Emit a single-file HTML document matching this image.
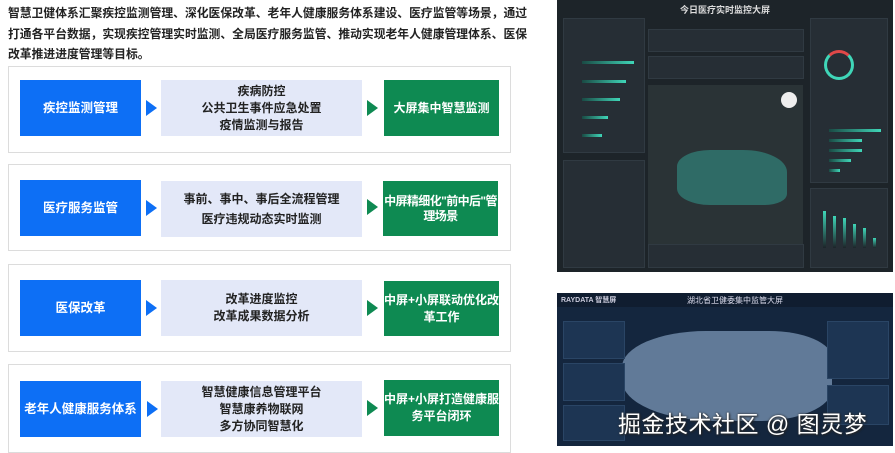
<!DOCTYPE html>
<html><head><meta charset="utf-8"><style>
*{margin:0;padding:0;box-sizing:border-box}
body{width:895px;height:453px;background:#fff;position:relative;overflow:hidden;font-family:"Liberation Sans","Noto Sans CJK SC",sans-serif}
.intro{position:absolute;left:8px;top:3px;white-space:nowrap;font-size:11.8px;font-weight:bold;line-height:20.5px;color:#222}
.frame{position:absolute;left:8px;width:503px;border:1.5px solid #dcdcdc;background:#fff}
.b{position:absolute;display:flex;align-items:center;justify-content:center;text-align:center;font-weight:bold;font-size:12.5px;line-height:17px}
.blue{left:20px;width:121px;height:56px;background:#0d6ff5;color:#fff}
.mid{left:161px;width:201px;height:56px;background:#e3e8f8;color:#222;font-size:12px}
.green{left:384px;width:115px;height:56px;background:#0e8a52;color:#fff;font-size:12px}
.ar{position:absolute;width:0;height:0;border-top:8px solid transparent;border-bottom:8px solid transparent;border-left:11px solid #0d6ff5}
.ag{border-left-color:#0e8a52}
.dark{position:absolute;background:#1b2228}
.p{position:absolute;background:#262e35;border:1px solid #303a42}
.bar{position:absolute;height:3px;background:linear-gradient(90deg,#1a4a44,#3fd6b8)}
.wm{position:absolute;left:618px;top:405px;font-size:23px;color:#fff;text-shadow:0 0 2px #333,1px 1px 2px #222;letter-spacing:0.5px}
</style></head><body>
<div class="intro">智慧卫健体系汇聚疾控监测管理、深化医保改革、老年人健康服务体系建设、医疗监管等场景，通过<br>打通各平台数据，实现疾控管理实时监测、全局医疗服务监管、推动实现老年人健康管理体系、医保<br>改革推进进度管理等目标。</div>

<div class="frame" style="top:66px;height:87px"></div>
<div class="b blue" style="top:80px">疾控监测管理</div>
<div class="ar" style="left:146px;top:100px"></div>
<div class="b mid" style="top:80px">疾病防控<br>公共卫生事件应急处置<br>疫情监测与报告</div>
<div class="ar ag" style="left:367px;top:100px"></div>
<div class="b green" style="top:80px">大屏集中智慧监测</div>

<div class="frame" style="top:164px;height:87px"></div>
<div class="b blue" style="top:180px">医疗服务监管</div>
<div class="ar" style="left:146px;top:200px"></div>
<div class="b mid" style="top:181px;line-height:20px">事前、事中、事后全流程管理<br>医疗违规动态实时监测</div>
<div class="ar ag" style="left:367px;top:199px"></div>
<div class="b green" style="top:181px;height:55px;left:383px;font-size:12px;letter-spacing:-0.6px;line-height:15px;white-space:nowrap">中屏精细化"前中后"管<br>理场景</div>

<div class="frame" style="top:264px;height:88px"></div>
<div class="b blue" style="top:280px">医保改革</div>
<div class="ar" style="left:146px;top:300px"></div>
<div class="b mid" style="top:280px">改革进度监控<br>改革成果数据分析</div>
<div class="ar ag" style="left:367px;top:300px"></div>
<div class="b green" style="top:281px;height:55px">中屏+小屏联动优化改<br>革工作</div>

<div class="frame" style="top:364px;height:89px"></div>
<div class="b blue" style="top:381px">老年人健康服务体系</div>
<div class="ar" style="left:147px;top:401px"></div>
<div class="b mid" style="top:381px">智慧健康信息管理平台<br>智慧康养物联网<br>多方协同智慧化</div>
<div class="ar ag" style="left:367px;top:400px"></div>
<div class="b green" style="top:380px">中屏+小屏打造健康服<br>务平台闭环</div>

<div class="dark" style="left:557px;top:0;width:336px;height:272px;background:#1d2429">
 <div style="position:absolute;left:0;top:3px;width:336px;text-align:center;color:#ddd;font-size:9px;font-weight:bold">今日医疗实时监控大屏</div>
 <div class="p" style="left:6px;top:18px;width:82px;height:135px"></div>
 <div class="bar" style="left:25px;top:61px;width:52px"></div>
 <div class="bar" style="left:25px;top:80px;width:44px"></div>
 <div class="bar" style="left:25px;top:98px;width:38px"></div>
 <div class="bar" style="left:25px;top:116px;width:26px"></div>
 <div class="bar" style="left:25px;top:134px;width:20px"></div>
 <div class="p" style="left:6px;top:160px;width:82px;height:108px"></div>
 <div class="p" style="left:91px;top:29px;width:156px;height:23px"></div>
 <div class="p" style="left:91px;top:56px;width:156px;height:23px"></div>
 <div style="position:absolute;left:91px;top:85px;width:155px;height:160px;background:#2a3336"></div>
 <div style="position:absolute;left:120px;top:150px;width:110px;height:55px;background:#2f6b66;border-radius:30% 40% 20% 30%"></div>
 <div style="position:absolute;left:224px;top:92px;width:16px;height:16px;border-radius:50%;background:#eee"></div>
 <div class="p" style="left:91px;top:244px;width:156px;height:24px"></div>
 <div class="p" style="left:253px;top:18px;width:78px;height:165px"></div>
 <div style="position:absolute;left:267px;top:50px;width:30px;height:30px;border-radius:50%;border:3px solid #3fd6b8;border-top-color:#e04848"></div>
 <div class="bar" style="left:272px;top:129px;width:52px"></div>
 <div class="bar" style="left:272px;top:139px;width:33px"></div>
 <div class="bar" style="left:272px;top:149px;width:33px"></div>
 <div class="bar" style="left:272px;top:159px;width:22px"></div>
 <div class="bar" style="left:272px;top:169px;width:11px"></div>
 <div class="p" style="left:253px;top:188px;width:78px;height:80px"></div>
 <div style="position:absolute;left:266px;top:211px;width:3px;height:37px;background:linear-gradient(#3fd6b8,#1d2429)"></div>
 <div style="position:absolute;left:276px;top:216px;width:3px;height:32px;background:linear-gradient(#3fd6b8,#1d2429)"></div>
 <div style="position:absolute;left:286px;top:218px;width:3px;height:30px;background:linear-gradient(#3fd6b8,#1d2429)"></div>
 <div style="position:absolute;left:296px;top:224px;width:3px;height:24px;background:linear-gradient(#3fd6b8,#1d2429)"></div>
 <div style="position:absolute;left:306px;top:228px;width:3px;height:20px;background:linear-gradient(#3fd6b8,#1d2429)"></div>
 <div style="position:absolute;left:316px;top:238px;width:3px;height:10px;background:linear-gradient(#3fd6b8,#1d2429)"></div>
</div>

<div class="dark" style="left:557px;top:293px;width:336px;height:153px;background:#14263e">
 <div style="position:absolute;left:0;top:0;width:336px;height:14px;background:#101d30"></div>
 <div style="position:absolute;left:4px;top:2px;color:#ccd;font-size:7px;font-weight:bold">RAYDATA 智慧屏</div>
 <div style="position:absolute;left:130px;top:2px;color:#dde;font-size:8px">湖北省卫健委集中监管大屏</div>
 <div style="position:absolute;left:65px;top:38px;width:210px;height:90px;background:#6f8aa8;border-radius:40% 30% 35% 45%;opacity:.85"></div>
 <div class="p" style="left:6px;top:28px;width:62px;height:38px;background:#1d3553;border-color:#2a4565"></div>
 <div class="p" style="left:6px;top:70px;width:62px;height:38px;background:#1d3553;border-color:#2a4565"></div>
 <div class="p" style="left:6px;top:112px;width:62px;height:36px;background:#1d3553;border-color:#2a4565"></div>
 <div class="p" style="left:270px;top:28px;width:62px;height:58px;background:#1d3553;border-color:#2a4565"></div>
 <div class="p" style="left:270px;top:92px;width:62px;height:40px;background:#1d3553;border-color:#2a4565"></div>
</div>
<div class="wm">掘金技术社区 @ 图灵梦</div>
</body></html>
